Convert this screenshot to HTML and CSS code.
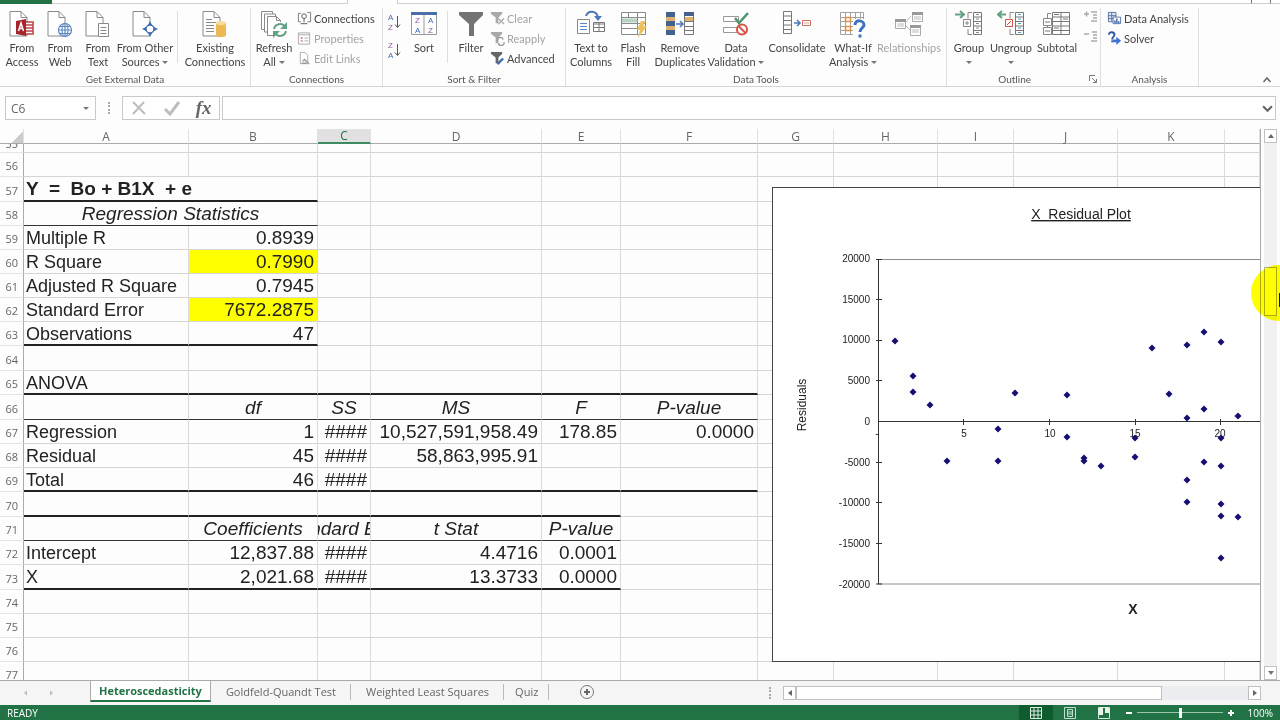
FILE: index.html
```html
<!DOCTYPE html>
<html lang="en">
<head>
    <meta charset="UTF-8">
    <meta name="viewport" content="width=device-width, initial-scale=1.0">
    <title>Heteroscedasticity</title>
    <link rel="stylesheet" href="styles.css">
</head>
<body>
    <!-- shared icon shapes -->
    <svg class="defs" aria-hidden="true">
        <symbol id="page" viewBox="0 0 28 28">
            <path d="M2 1.5h11l6 6v18.5h-17z" fill="#fff" stroke="#8a8a8a"/>
            <path d="M13 1.5v6h6" fill="none" stroke="#8a8a8a"/>
        </symbol>
        <symbol id="funnel" viewBox="0 0 28 28">
            <path d="M2 2h24v3l-9 9v12h-5v-12l-10-9z"/>
        </symbol>
    </svg>

    <div class="tab-strip">
        <div class="file-tab"></div>
        <div class="strip-left"></div>
        <div class="strip-active"></div>
        <div class="strip-rest"></div>
        <div class="strip-mark"></div>
        <div class="strip-end"></div>
    </div>

    <div class="ribbon">
        <section class="group">
            <div class="tools first">
                <button class="tool small">
                    <svg viewBox="0 0 28 28"><use href="#page"/><path d="M17 12h8v12h-8" fill="#fff" stroke="#b8444a" stroke-width="1.5"/><path d="M17 15h8M17 18h8M17 21h8" stroke="#b8444a" stroke-width="1.5"/><path d="M8 11l10-2v17l-10-2z" fill="#a4262c"/><path d="M10.5 21l2.5-8 2.5 8M11 18.5h4" fill="none" stroke="#fff" stroke-width="1.5"/></svg>
                    <span>From<br>Access</span>
                </button>
                <button class="tool small">
                    <svg viewBox="0 0 28 28"><use href="#page"/><g fill="#fff" stroke="#5b86c0" stroke-width="1.2"><circle cx="19" cy="20" r="6.5"/><ellipse cx="19" cy="20" rx="3" ry="6.5"/><path d="M12.5 20h13M14 16.5h10M14 23.5h10M19 13.5v13" fill="none"/></g></svg>
                    <span>From<br>Web</span>
                </button>
                <button class="tool small">
                    <svg viewBox="0 0 28 28"><use href="#page"/><path d="M14.5 13.5h10v13h-10z" fill="#fff" stroke="#8a8a8a"/><path d="M16.5 17.5h6M16.5 20.5h6M16.5 23.5h6" stroke="#8a8a8a"/></svg>
                    <span>From<br>Text</span>
                </button>
                <button class="tool large">
                    <svg viewBox="0 0 28 28"><use href="#page"/><circle cx="19" cy="19" r="4" fill="#fff" stroke="#3f69b0" stroke-width="1.5"/><path d="M19 11l2 4h-4zM19 27l2-4h-4zM11 19l4-2v4zM27 19l-4-2v4z" fill="#3f69b0"/></svg>
                    <span>From Other<br>Sources <i class="caret"></i></span>
                </button>
                <div class="divider"></div>
                <button class="tool wide">
                    <svg viewBox="0 0 28 28"><use href="#page"/><path d="M5 9.5h6M5 12.5h10M5 15.5h8M5 18.5h8M5 21.5h8" stroke="#8a8a8a"/><path d="M15 13v12c0 3 10 3 10 0v-12z" fill="#ecba55"/><ellipse cx="20" cy="13" rx="5" ry="2" fill="#f7dc9c"/></svg>
                    <span>Existing<br>Connections</span>
                </button>
            </div>
            <h2>Get External Data</h2>
        </section>

        <section class="group refresh">
            <div class="tools">
                <button class="tool medium">
                    <svg viewBox="0 0 28 28"><g fill="#fff" stroke="#8a8a8a"><path d="M1.5 1.5h11v18h-11z"/><path d="M4.5 4h11v18h-11z"/><path d="M7.5 6.5h9l4 4v15h-13z"/><path d="M16.5 6.5v4h4" fill="none"/></g><circle cx="20" cy="20" r="8" fill="#fff"/><g fill="none" stroke="#63a183" stroke-width="2"><path d="M14 19a6 6 0 0 1 11-2M26 21a6 6 0 0 1-11 2"/></g><path d="M27 12v7h-7zM13 28v-7h7z" fill="#63a183"/></svg>
                    <span>Refresh<br>All <i class="caret"></i></span>
                </button>
                <div class="stack">
                    <button class="line"><svg viewBox="0 0 16 16"><path d="M4 2.5h-2.5v9h2.5M11 1.5h3.5v10h-3.5" fill="none" stroke="#777"/><circle cx="7.5" cy="5.5" r="2.5" fill="none" stroke="#555"/><path d="M7.5 8v4M4 13.5h7" stroke="#555"/></svg>Connections</button>
                    <button class="line" disabled><svg viewBox="0 0 16 16"><path d="M1.5 2h12v12h-12z" fill="none" stroke="#aaa"/><path d="M1.5 4h12" stroke="#aaa"/><path d="M4 7.5h2M4 10.5h2" stroke="#c99" stroke-width="2"/><path d="M8 7.5h4M8 10.5h4" stroke="#aaa"/></svg>Properties</button>
                    <button class="line" disabled><svg viewBox="0 0 16 16"><path d="M3.5 1.5h5l3 3v9h-8z" fill="none" stroke="#aaa"/><path d="M6 11l2-2 2 2 3 3M5 13h5" fill="none" stroke="#999" stroke-width="1.5"/></svg>Edit Links</button>
                </div>
            </div>
            <h2>Connections</h2>
        </section>

        <section class="group sort">
            <div class="tools">
                <div class="stack az">
                    <button class="mini" aria-label="Sort A to Z"><svg viewBox="0 0 14 20"><text x="1" y="8" class="blue">A</text><text x="1" y="18" class="violet">Z</text><path d="M10.5 4v11M8 12.5l2.5 3 2.5-3" fill="none" stroke="#555"/></svg></button>
                    <button class="mini" aria-label="Sort Z to A"><svg viewBox="0 0 14 20"><text x="1" y="8" class="violet">Z</text><text x="1" y="18" class="blue">A</text><path d="M10.5 4v11M8 12.5l2.5 3 2.5-3" fill="none" stroke="#555"/></svg></button>
                </div>
                <button class="tool small">
                    <svg viewBox="0 0 28 28" class="letters"><path d="M1.5 3.5h25v21h-25z" fill="#fff" stroke="#999"/><path d="M1 2h26v3h-26z" fill="#4a6fa8"/><path d="M14 5v20" stroke="#999"/><text x="5" y="13" class="violet">Z</text><text x="5" y="23" class="blue">A</text><text x="18" y="13" class="blue">A</text><text x="18" y="23" class="violet">Z</text></svg>
                    <span>Sort</span>
                </button>
                <div class="divider"></div>
                <button class="tool small">
                    <svg viewBox="0 0 28 28" fill="#737373"><use href="#funnel"/></svg>
                    <span>Filter</span>
                </button>
                <div class="stack">
                    <button class="line" disabled><svg viewBox="0 0 16 16"><path d="M1 1h12v2l-4 4v6h-3v-6l-5-4z" fill="#aaa"/><path d="M9 8l6 6M15 8l-6 6" stroke="#aaa" stroke-width="1.5"/></svg>Clear</button>
                    <button class="line" disabled><svg viewBox="0 0 16 16"><path d="M1 1h12v2l-4 4v6h-3v-6l-5-4z" fill="#aaa"/><path d="M8 11a3 3 0 0 1 6-2M15 12a3 3 0 0 1-6 1" fill="none" stroke="#999" stroke-width="1.5"/></svg>Reapply</button>
                    <button class="line"><svg viewBox="0 0 16 16"><path d="M1 1h12v2l-4 4v6h-3v-6l-5-4z" fill="#666"/><path d="M8 14l6-6" stroke="#3f69b0" stroke-width="2.5"/></svg>Advanced</button>
                </div>
            </div>
            <h2>Sort &amp; Filter</h2>
        </section>

        <section class="group data">
            <div class="tools">
                <button class="tool medium">
                    <svg viewBox="0 0 28 28"><path d="M9 6c2-6 11-6 12 2" fill="none" stroke="#4a78b8" stroke-width="2"/><path d="M17 6h8l-4 5z" fill="#4a78b8"/><path d="M.5 9.5h12v14h-12z" fill="#fff" stroke="#888"/><path d="M3 13.5h7M3 16.5h7M3 19.5h7" stroke="#5b86c0"/><path d="M16.5 12.5h11v9h-11z" fill="#fff" stroke="#777"/><path d="M16 14h12M22 12v9M16 17.5h12" stroke="#777"/></svg>
                    <span>Text to<br>Columns</span>
                </button>
                <button class="tool small">
                    <svg viewBox="0 0 28 28"><path d="M2.5 2.5h24v22h-24z" fill="#fff" stroke="#8a8a8a"/><path d="M2 7.5h24M2 13.5h24M2 18.5h18M9.5 2v5M18.5 2v22" stroke="#8a8a8a"/><path d="M3 10.5h15" stroke="#b5d3be" stroke-width="4"/><path d="M22 11h5l-3 5h4l-9 12 2-8h-3z" fill="#eec05c"/></svg>
                    <span>Flash<br>Fill</span>
                </button>
                <button class="tool large">
                    <svg viewBox="0 0 28 28"><path d="M0 2h9v23h-9z" fill="#44618f"/><path d="M0 7h9v4h-9zM0 16h9v4h-9z" fill="#deb171"/><path d="M10 14h6M14 11l3 3-3 3" fill="none" stroke="#4a78b8" stroke-width="1.5"/><path d="M18.5 2.5h9v22h-9z" fill="#fff" stroke="#777"/><path d="M18 2h10v4h-10z" fill="#44618f"/><path d="M19 7h8v4h-8z" fill="#deb171"/><path d="M18 16.5h10M18 20.5h10M18 11.5h10" stroke="#777"/></svg>
                    <span>Remove<br>Duplicates</span>
                </button>
                <button class="tool large">
                    <svg viewBox="0 0 28 28"><path d="M1.5 6.5h15v5h-15zM1.5 17.5h14v5h-14z" fill="#fff" stroke="#999"/><path d="M13 8l4 5 9-10" fill="none" stroke="#52936f" stroke-width="2.5"/><circle cx="20" cy="19.5" r="5" fill="#fff" stroke="#d65345" stroke-width="2"/><path d="M16.5 16l7 7" stroke="#d65345" stroke-width="2"/></svg>
                    <span>Data<br>Validation <i class="caret"></i></span>
                </button>
                <button class="tool wide">
                    <svg viewBox="0 0 28 28"><path d="M.5 1.5h8v22h-8zM.5 6h8M.5 10.5h8M.5 15h8M.5 19.5h8" fill="#fff" stroke="#777"/><path d="M11 13h6M14 10l3 3-3 3" fill="none" stroke="#4a78b8" stroke-width="1.5"/><path d="M19.5 10.5h8v5h-8z" fill="#fff" stroke="#d07065"/><path d="M21 13h5" stroke="#e2a49d"/></svg>
                    <span>Consolidate</span>
                </button>
                <button class="tool medium">
                    <svg viewBox="0 0 28 28"><path d="M1.5 2.5h23v22h-23zM6.5 2v22M11.5 2v22M16.5 2v22M21.5 2v22M1 7.5h23M1 11.5h23M1 16.5h23M1 20.5h23" fill="#fff" stroke="#a2a2a2"/><path d="M6.5 7.5h5v4h-5zM6.5 16.5h5v4h-5z" fill="#fff" stroke="#e09040" stroke-width="1.5"/><path d="M14 9h13v18h-13z" fill="#fff"/><path d="M16 15c0-6 9-5 9 0 0 3-4 3-4 7M21 24.5v3" fill="none" stroke="#3f72bd" stroke-width="3"/></svg>
                    <span>What-If<br>Analysis <i class="caret"></i></span>
                </button>
                <button class="tool wide" disabled>
                    <svg viewBox="0 0 28 28"><path d="M10 13l6-7M10 15l6 6" stroke="#bbb"/><path d="M.5 9.5h10v9h-10zM17.5 2.5h10v9h-10zM15.5 15.5h10v10h-10z" fill="#fff" stroke="#aaa"/><path d="M0 10.5h11M17 3.5h11M15 16.5h11" stroke="#999" stroke-width="3"/><path d="M2 14h7M2 16h7M19 7h7M19 9h7M17 20h7M17 22h7" stroke="#bbb"/></svg>
                    <span>Relationships</span>
                </button>
            </div>
            <h2>Data Tools</h2>
        </section>

        <section class="group outline">
            <div class="tools">
                <button class="tool small">
                    <svg viewBox="0 0 28 28"><path d="M0 4.5h8M5 1l4 3.5-4 3.5" fill="none" stroke="#63a183" stroke-width="2"/><path d="M17 2.5h-4v6M13 19v5.5h4" fill="none" stroke="#888"/><path d="M8.5 9.5h7v7h-7zM10 13h4M12 11v4" fill="none" stroke="#888"/><path d="M18.5 2.5h8v22h-8zM18 7h9M18 11.5h9M18 16h9M18 20.5h9" fill="#fff" stroke="#777"/><path d="M21 4.5h3M21 9h3M21 13.5h3M21 18h3M21 22.5h3" stroke="#888"/></svg>
                    <span>Group<br><i class="caret"></i></span>
                </button>
                <button class="tool medium">
                    <svg viewBox="0 0 28 28"><path d="M1 4.5h8M5 1l-4 3.5 4 3.5" fill="none" stroke="#63a183" stroke-width="2"/><path d="M17 2.5h-4v6M13 19v5.5h4" fill="none" stroke="#888"/><path d="M8.5 9.5h7v7h-7zM10 15l4-4" fill="#fff" stroke="#d65345"/><path d="M18.5 2.5h8v22h-8zM18 7h9M18 11.5h9M18 16h9M18 20.5h9" fill="#fff" stroke="#777"/><path d="M21 4.5h3M21 9h3M21 13.5h3M21 18h3M21 22.5h3" stroke="#5b9bb8"/></svg>
                    <span>Ungroup<br><i class="caret"></i></span>
                </button>
                <button class="tool medium">
                    <svg viewBox="0 0 28 28"><path d="M8 3.5h-3.5v5M4.5 15v2" fill="none" stroke="#888"/><path d="M9.5 2.5h17v22h-17zM9 7h18M9 11.5h18M9 16h18M9 20.5h18M18 2v22" fill="#fff" stroke="#777"/><path d="M.5 8.5h8v7h-8zM.5 17.5h8v7h-8z" fill="#fff" stroke="#888"/><path d="M2 12h5M2 21h5M11 4.5h5M20 9h5M11 18h5" stroke="#777"/></svg>
                    <span>Subtotal</span>
                </button>
                <div class="stack">
                    <button class="mini" disabled aria-label="Show Detail"><svg viewBox="0 0 14 20"><path d="M0 6h5M2.5 3.5v5M7 4h6M9 7h4M9 10h4M7 13h6" stroke="#aaa" stroke-width="1.5"/></svg></button>
                    <button class="mini" disabled aria-label="Hide Detail"><svg viewBox="0 0 14 20"><path d="M0 6h5M8 4h5M9 7h4M9 10h4M7 13h6" stroke="#aaa" stroke-width="1.5"/></svg></button>
                </div>
            </div>
            <h2>Outline <button class="launcher" aria-label="Outline settings"><svg viewBox="0 0 8 8"><path d="M.5 6v-5.5h5.5M3 3l4 4M7.5 4v3.5h-3.5" fill="none" stroke="#777"/></svg></button></h2>
        </section>

        <section class="group analysis">
            <div class="tools">
                <div class="stack">
                    <button class="line"><svg viewBox="0 0 16 16"><path d="M1.5 1.5h8v10h-8zM1 5h9M1 8h9M5 1v10" fill="#dfe6f3" stroke="#5874a8"/><path d="M6.5 6.5h8v7h-8z" fill="#fff" stroke="#5874a8"/><path d="M8.5 13v-3M10.5 13v-5M12.5 13v-2" stroke="#3f69b0" stroke-width="1.5"/></svg>Data Analysis</button>
                    <button class="line"><svg viewBox="0 0 16 16"><path d="M2 4c0-4 6-3 6 0 0 2-2.5 2-2.5 5M5.5 10v2" fill="none" stroke="#2f55a8" stroke-width="2"/><path d="M6 9h4v-3l5 4.5-5 4.5v-3h-4z" fill="#3f72d0"/></svg>Solver</button>
                </div>
            </div>
            <h2>Analysis</h2>
        </section>

        <button class="collapse" aria-label="Collapse the ribbon"><svg viewBox="0 0 10 10"><path d="M1.5 7l3.5-4 3.5 4" fill="none" stroke="#666" stroke-width="1.5"/></svg></button>
    </div>

    <div class="formula-bar">
        <div class="name-box">
            <input type="text" value="C6" aria-label="Name box">
            <i class="caret"></i>
        </div>
        <div class="dots"></div>
        <div class="fx-box">
            <button aria-label="Cancel"><svg viewBox="0 0 18 16"><path d="M3 2l12 12M14 2l-11 12" stroke="#bdbdbd" stroke-width="2"/></svg></button>
            <button aria-label="Enter"><svg viewBox="0 0 18 16"><path d="M2 9l5 5 9-12" fill="none" stroke="#bdbdbd" stroke-width="3"/></svg></button>
            <button class="fx" aria-label="Insert function">fx</button>
        </div>
        <div class="formula">
            <input type="text" aria-label="Formula">
            <svg viewBox="0 0 10 10"><path d="M1 3l4 4 4-4" fill="none" stroke="#666" stroke-width="2"/></svg>
        </div>
    </div>

    <div class="workspace">
        <main class="sheet">
            <table>
                <colgroup>
                    <col class="c-num"><col class="c-a"><col class="c-b"><col class="c-c"><col class="c-d"><col class="c-e"><col class="c-f">
                    <col class="c-g"><col class="c-h"><col class="c-g"><col class="c-h"><col class="c-k"><col>
                </colgroup>
                <thead>
                    <tr><th class="corner"></th><th>A</th><th>B</th><th class="selected">C</th><th>D</th><th>E</th><th>F</th><th>G</th><th>H</th><th>I</th><th>J</th><th>K</th><th></th></tr>
                </thead>
                <tbody>
                    <tr class="cut"><th><div>55</div></th><td></td><td></td><td></td><td></td><td></td><td></td><td></td><td></td><td></td><td></td><td></td><td></td></tr>
                    <tr><th>56</th><td></td><td></td><td></td><td></td><td></td><td></td><td></td><td></td><td></td><td></td><td></td><td></td></tr>
                    <tr class="tall"><th>57</th><td colspan="2" class="model thick">Y  =  Bo + B1X  + e</td><td></td><td></td><td></td><td></td><td></td><td></td><td></td><td></td><td></td><td></td></tr>
                    <tr><th>58</th><td colspan="2" class="head thin">Regression Statistics</td><td></td><td></td><td></td><td></td><td></td><td></td><td></td><td></td><td></td><td></td></tr>
                    <tr><th>59</th><td>Multiple R</td><td class="num">0.8939</td><td></td><td></td><td></td><td></td><td></td><td></td><td></td><td></td><td></td><td></td></tr>
                    <tr><th>60</th><td>R Square</td><td class="num marked">0.7990</td><td></td><td></td><td></td><td></td><td></td><td></td><td></td><td></td><td></td><td></td></tr>
                    <tr><th>61</th><td>Adjusted R Square</td><td class="num">0.7945</td><td></td><td></td><td></td><td></td><td></td><td></td><td></td><td></td><td></td><td></td></tr>
                    <tr><th>62</th><td>Standard Error</td><td class="num marked">7672.2875</td><td></td><td></td><td></td><td></td><td></td><td></td><td></td><td></td><td></td><td></td></tr>
                    <tr><th>63</th><td class="thick">Observations</td><td class="num thick">47</td><td></td><td></td><td></td><td></td><td></td><td></td><td></td><td></td><td></td><td></td></tr>
                    <tr class="tall"><th>64</th><td></td><td></td><td></td><td></td><td></td><td></td><td></td><td></td><td></td><td></td><td></td><td></td></tr>
                    <tr><th>65</th><td class="thick">ANOVA</td><td class="thick"></td><td class="thick"></td><td class="thick"></td><td class="thick"></td><td class="thick"></td><td></td><td></td><td></td><td></td><td></td><td></td></tr>
                    <tr class="tall"><th>66</th><td class="thin"></td><td class="head thin">df</td><td class="head thin">SS</td><td class="head thin">MS</td><td class="head thin">F</td><td class="head thin">P-value</td><td></td><td></td><td></td><td></td><td></td><td></td></tr>
                    <tr><th>67</th><td>Regression</td><td class="num">1</td><td class="num">####</td><td class="num">10,527,591,958.49</td><td class="num">178.85</td><td class="num">0.0000</td><td></td><td></td><td></td><td></td><td></td><td></td></tr>
                    <tr><th>68</th><td>Residual</td><td class="num">45</td><td class="num">####</td><td class="num">58,863,995.91</td><td></td><td></td><td></td><td></td><td></td><td></td><td></td><td></td></tr>
                    <tr><th>69</th><td class="thick">Total</td><td class="num thick">46</td><td class="num thick">####</td><td class="thick"></td><td class="thick"></td><td class="thick"></td><td></td><td></td><td></td><td></td><td></td><td></td></tr>
                    <tr class="tall"><th>70</th><td class="thick"></td><td class="thick"></td><td class="thick"></td><td class="thick"></td><td class="thick"></td><td></td><td></td><td></td><td></td><td></td><td></td><td></td></tr>
                    <tr><th>71</th><td class="thin"></td><td class="head thin">Coefficients</td><td class="head thin"><div class="clipped">Standard Error</div></td><td class="head thin">t Stat</td><td class="head thin">P-value</td><td></td><td></td><td></td><td></td><td></td><td></td><td></td></tr>
                    <tr><th>72</th><td>Intercept</td><td class="num">12,837.88</td><td class="num">####</td><td class="num">4.4716</td><td class="num">0.0001</td><td></td><td></td><td></td><td></td><td></td><td></td><td></td></tr>
                    <tr class="tall"><th>73</th><td class="thick">X</td><td class="num thick">2,021.68</td><td class="num thick">####</td><td class="num thick">13.3733</td><td class="num thick">0.0000</td><td></td><td></td><td></td><td></td><td></td><td></td><td></td></tr>
                    <tr><th>74</th><td></td><td></td><td></td><td></td><td></td><td></td><td></td><td></td><td></td><td></td><td></td><td></td></tr>
                    <tr><th>75</th><td></td><td></td><td></td><td></td><td></td><td></td><td></td><td></td><td></td><td></td><td></td><td></td></tr>
                    <tr><th>76</th><td></td><td></td><td></td><td></td><td></td><td></td><td></td><td></td><td></td><td></td><td></td><td></td></tr>
                    <tr><th>77</th><td></td><td></td><td></td><td></td><td></td><td></td><td></td><td></td><td></td><td></td><td></td><td></td></tr>
                </tbody>
            </table>

            <!-- residual plot floats over the cells -->
            <svg class="chart" viewBox="772 187 620 475" width="620" height="475">
                <defs><path id="pt" d="M0-3.5l3.5 3.5-3.5 3.5-3.5-3.5z"/></defs>
                <rect x="772.5" y="187.5" width="619" height="474" fill="#fff" stroke="#444"/>
                <text class="chart-title" x="1081" y="219">X&#160; Residual Plot</text>
                <path d="M878.5 259.5h432v324.5h-432" fill="none" stroke="#8c8c8c"/>
                <path d="M878.5 259v325M876 259.5h6M876 299.5h6M876 340.5h6M876 380.5h6M878 421.5h432M876 462.5h6M876 502.5h6M876 543.5h6M876 584h6M963.5 419v6M1049.5 419v6M1135.5 419v6M1220.5 419v6" fill="none" stroke="#333"/>
                <g class="y-labels">
                    <text x="870" y="262">20000</text><text x="870" y="303">15000</text><text x="870" y="343">10000</text>
                    <text x="870" y="384">5000</text><text x="870" y="425">0</text><text x="870" y="466">-5000</text>
                    <text x="870" y="506">-10000</text><text x="870" y="547">-15000</text><text x="870" y="588">-20000</text>
                </g>
                <g class="x-labels">
                    <text x="877" y="437">-</text><text x="964" y="437">5</text><text x="1050" y="437">10</text><text x="1135" y="437">15</text><text x="1220" y="437">20</text>
                </g>
                <text class="y-title" transform="translate(806 405) rotate(-90)">Residuals</text>
                <text class="x-title" x="1133" y="614">X</text>
                <g fill="#150f70">
                    <use href="#pt" x="895" y="341"/><use href="#pt" x="913" y="376"/><use href="#pt" x="913" y="392"/>
                    <use href="#pt" x="930" y="405"/><use href="#pt" x="947" y="461"/><use href="#pt" x="998" y="429"/>
                    <use href="#pt" x="998" y="461"/><use href="#pt" x="1015" y="393"/><use href="#pt" x="1067" y="395"/>
                    <use href="#pt" x="1067" y="437"/><use href="#pt" x="1084" y="458"/><use href="#pt" x="1084" y="461"/>
                    <use href="#pt" x="1101" y="466"/><use href="#pt" x="1135" y="438"/><use href="#pt" x="1135" y="457"/>
                    <use href="#pt" x="1152" y="348"/><use href="#pt" x="1169" y="394"/><use href="#pt" x="1187" y="345"/>
                    <use href="#pt" x="1187" y="418"/><use href="#pt" x="1187" y="480"/><use href="#pt" x="1187" y="502"/>
                    <use href="#pt" x="1204" y="332"/><use href="#pt" x="1204" y="409"/><use href="#pt" x="1204" y="462"/>
                    <use href="#pt" x="1221" y="342"/><use href="#pt" x="1221" y="438"/><use href="#pt" x="1221" y="466"/>
                    <use href="#pt" x="1221" y="504"/><use href="#pt" x="1221" y="516"/><use href="#pt" x="1221" y="558"/>
                    <use href="#pt" x="1238" y="416"/><use href="#pt" x="1238" y="517"/>
                </g>
            </svg>
        </main>

        <div class="v-scroll">
            <button class="arrow" aria-label="Scroll up"><svg viewBox="0 0 8 8"><path d="M1 6l3-4 3 4z" fill="#666"/></svg></button>
            <div class="v-track"><div class="v-thumb"></div></div>
            <button class="arrow" aria-label="Scroll down"><svg viewBox="0 0 8 8"><path d="M1 2l3 4 3-4z" fill="#777"/></svg></button>
            <div class="halo"></div>
            <div class="pointer"></div>
        </div>
    </div>

    <div class="sheet-bar">
        <div class="sheet-nav">
            <button aria-label="Previous sheet"><svg viewBox="0 0 8 8"><path d="M5 1.5l-3 2.5 3 2.5z" fill="#bbb"/></svg></button>
            <button aria-label="Next sheet"><svg viewBox="0 0 8 8"><path d="M3 1.5l3 2.5-3 2.5z" fill="#bbb"/></svg></button>
        </div>
        <nav class="sheet-tabs">
            <button class="active">Heteroscedasticity</button>
            <button>Goldfeld-Quandt Test</button>
            <button>Weighted Least Squares</button>
            <button class="short">Quiz</button>
        </nav>
        <button class="add" aria-label="New sheet"><svg viewBox="0 0 16 16"><circle cx="8" cy="8" r="6.5" fill="none" stroke="#777"/><path d="M8 5v6M5 8h6" stroke="#666" stroke-width="2"/></svg></button>
        <div class="h-scroll">
            <div class="dots"></div>
            <button class="arrow" aria-label="Scroll left"><svg viewBox="0 0 8 8"><path d="M6 1l-4 3 4 3z" fill="#666"/></svg></button>
            <div class="h-track"><div class="h-thumb"></div></div>
            <button class="arrow" aria-label="Scroll right"><svg viewBox="0 0 8 8"><path d="M2 1l4 3-4 3z" fill="#666"/></svg></button>
        </div>
    </div>

    <footer class="status-bar">
        <span class="ready">READY</span>
        <button class="view on" aria-label="Normal view"><svg viewBox="0 0 14 12"><path d="M1.5.5h11v11h-11zM5 0v12M9 0v12M1 4h12M1 8h12" fill="none" stroke="#dcebe2"/></svg></button>
        <button class="view" aria-label="Page layout view"><svg viewBox="0 0 14 12"><path d="M1.5.5h11v11h-11zM4.5 2.5h5v7h-5zM5 5h4M5 7h4" fill="none" stroke="#c4dccd"/></svg></button>
        <button class="view" aria-label="Page break view"><svg viewBox="0 0 14 12"><path d="M1.5.5h11v11h-11z" fill="none" stroke="#dcebe2"/><path d="M2 1h4v7h-4zM8 1h4v5h-4z" fill="#e8f3ec"/></svg></button>
        <div class="zoom">
            <button aria-label="Zoom out"><svg viewBox="0 0 8 8"><path d="M1 4h6" stroke="#fff" stroke-width="2"/></svg></button>
            <input type="range" min="0" max="100" value="50" aria-label="Zoom">
            <button aria-label="Zoom in"><svg viewBox="0 0 8 8"><path d="M1 4h6M4 1v6" stroke="#fff" stroke-width="2"/></svg></button>
        </div>
        <span class="percent">100%</span>
    </footer>
</body>
</html>
```

FILE: styles.css
```css
* {
    box-sizing: border-box;
}
body {
    margin: 0;
    height: 100vh;
    display: flex;
    flex-direction: column;
    overflow: hidden;
    background: #fdfdfd;
    color: #444;
    font-family: "Open Sans", "Noto Sans", sans-serif;
    font-size: 11px;
}
button {
    margin: 0;
    padding: 0;
    border: 0;
    background: none;
    color: inherit;
    font: inherit;
}
button:disabled {
    color: #a3a3a3;
}
input {
    min-width: 0;
    border: 0;
    padding: 0;
    background: none;
    font: inherit;
    color: inherit;
    outline: none;
}
svg {
    display: block;
    flex: none;
}
.defs {
    position: absolute;
    width: 0;
    height: 0;
}
.caret {
    display: inline-block;
    border: 3px solid transparent;
    border-top-color: #777;
    border-bottom: 0;
    vertical-align: 2px;
}

/* strip of ribbon tabs, mostly scrolled away */
.tab-strip {
    display: flex;
    height: 4px;
    flex: none;
}
.tab-strip div {
    border-bottom: 1px solid #d0d0d0;
}
.tab-strip .file-tab {
    width: 52px;
    background: #217346;
    border-color: #217346;
}
.strip-left {
    width: 295px;
}
.tab-strip .strip-active {
    width: 51px;
    border: solid #d0d0d0;
    border-width: 0 1px;
}
.strip-rest {
    flex: 1;
}
.strip-mark {
    width: 20px;
    border-left: 1px solid #777;
    border-right: 1px solid #777;
}
.strip-end {
    width: 9px;
}

/* ribbon */
.ribbon {
    display: flex;
    flex: none;
    height: 83px;
    padding-top: 4px;
    border-bottom: 1px solid #d5d5d5;
    font-family: Lato, "Open Sans", sans-serif;
}
.group {
    display: flex;
    flex-direction: column;
    flex: none;
    width: 251px;
    height: 78px;
    border-right: 1px solid #dedede;
}
.group.refresh { width: 132px; }
.group.sort { width: 183px; }
.group.data { width: 381px; }
.group.outline { width: 154px; }
.group.analysis { width: 98px; }
.group h2 {
    display: flex;
    justify-content: center;
    margin: 0;
    font-size: 10px;
    line-height: 14px;
    font-weight: 400;
    color: #555;
}
.tools {
    display: flex;
    flex: 1;
}
.tools.first,
.outline .tools {
    padding-left: 3px;
}
.data .tools {
    padding-left: 2px;
}
.analysis .tools {
    padding-left: 6px;
}
.tool {
    display: flex;
    flex-direction: column;
    flex: none;
    align-items: center;
    gap: 3px;
    padding-top: 2px;
    line-height: 14px;
    white-space: nowrap;
}
.tool > svg {
    width: 28px;
    height: 28px;
}
.tool.small { width: 38px; }
.tool.medium { width: 46px; }
.tool.large { width: 56px; }
.tool.wide { width: 66px; }
.divider {
    flex: none;
    width: 1px;
    height: 52px;
    margin: 3px 4px 0;
    background: #dedede;
}
.stack {
    display: flex;
    flex-direction: column;
    flex: none;
}
.stack.az,
.outline .stack {
    width: 22px;
    align-items: center;
}
.line {
    display: flex;
    align-items: center;
    gap: 2px;
    height: 20px;
    white-space: nowrap;
}
.line svg {
    width: 15px;
    height: 15px;
}
.mini {
    height: 28px;
}
.outline .mini {
    height: 20px;
}
.mini svg {
    width: 14px;
    height: 20px;
}
.mini text,
.letters text {
    font: 8px "Liberation Sans", Arial, sans-serif;
}
.blue { fill: #3f69b0; }
.violet { fill: #8a5aa8; }
.launcher {
    margin: 0 0 0 58px;
}
.outline h2 {
    justify-content: flex-end;
    align-items: center;
    padding-right: 3px;
}
.launcher svg {
    width: 8px;
    height: 8px;
}
.collapse {
    margin: 0 8px 1px auto;
    align-self: flex-end;
}
.collapse svg {
    width: 10px;
    height: 10px;
}

/* formula bar */
.formula-bar {
    display: flex;
    flex: none;
    height: 24px;
    margin: 9px 4px 9px 5px;
}
.name-box,
.fx-box,
.formula {
    display: flex;
    align-items: center;
    border: 1px solid #c9c9c9;
    background: #fff;
}
.name-box {
    width: 91px;
    padding: 0 6px 0 5px;
    font-size: 12px;
    color: #666;
}
.name-box input {
    flex: 1;
}
.dots {
    width: 2px;
    height: 12px;
    margin: 6px 12px 0 12px;
    border-left: 2px dotted #aaa;
}
.fx-box {
    width: 98px;
    justify-content: space-around;
}
.fx-box svg {
    width: 18px;
    height: 16px;
}
.fx-box .fx {
    font: italic bold 19px "Liberation Serif", serif;
    color: #666;
}
.formula {
    flex: 1;
    margin-left: 2px;
    padding-right: 2px;
}
.formula input {
    flex: 1;
}
.formula svg {
    width: 11px;
    height: 11px;
}

/* sheet */
.workspace {
    display: flex;
    flex: 1;
    min-height: 0;
}
.sheet {
    position: relative;
    flex: 1;
    overflow: hidden;
    border-right: 1px solid #ababab;
}
table {
    width: 100%;
    table-layout: fixed;
    border-collapse: separate;
    border-spacing: 0;
}
.c-num { width: 24px; }
.c-a { width: 165px; }
.c-b { width: 129px; }
.c-c { width: 53px; }
.c-d { width: 171px; }
.c-e { width: 79px; }
.c-f { width: 137px; }
.c-g { width: 76px; }
.c-h { width: 104px; }
.c-k { width: 107px; }
th {
    padding: 0;
    font-size: 11px;
    font-weight: 400;
    color: #666;
}
thead th {
    height: 15px;
    line-height: 13px;
    font-size: 12px;
    border-right: 1px solid #e0e0e0;
    border-bottom: 1px solid #ababab;
}
thead .selected {
    background: #e1e1e1;
    color: #217346;
    border-bottom: 2px solid #3d8a63;
}
thead .corner {
    background: linear-gradient(135deg, transparent 70%, #ccc 70%);
}
tbody th {
    padding: 3px 5px 0 0;
    text-align: right;
    line-height: 18px;
    border-right: 1px solid #ababab;
    border-bottom: 1px solid #e4e4e4;
}
td {
    height: 24px;
    padding: 1px 3px 0 2px;
    overflow: hidden;
    border-right: 1px solid #dadada;
    border-bottom: 1px solid #d4d4d4;
    font: 18px/20px "Liberation Sans", Arial, sans-serif;
    color: #222;
    white-space: pre;
}
.tall td {
    height: 25px;
}
.cut th,
.cut td {
    height: 9px;
    padding: 0;
    line-height: 8px;
}
.cut th div {
    display: flex;
    align-items: flex-end;
    justify-content: flex-end;
    height: 8px;
    padding-right: 5px;
    overflow: hidden;
    line-height: 16px;
}
.num {
    font-size: 19px;
    text-align: right;
}
.head {
    padding: 1px 3px 0;
    font-size: 19px;
    font-style: italic;
    text-align: center;
}
.model {
    font-size: 19px;
    font-weight: 700;
}
.marked {
    background: #ffff00;
}
.thick {
    border-bottom: 2px solid #222;
}
.thin {
    border-bottom: 1px solid #333;
}
.clipped {
    display: flex;
    justify-content: center;
    margin: 0 -3px;
    overflow: hidden;
}

/* chart */
.chart {
    position: absolute;
    left: 772px;
    top: 58px;
    font-family: "Liberation Sans", Arial, sans-serif;
    fill: #222;
}
.chart-title {
    font-size: 14px;
    text-anchor: middle;
    text-decoration: underline;
}
.y-labels {
    font-size: 10px;
    text-anchor: end;
}
.x-labels {
    font-size: 10px;
    text-anchor: middle;
}
.y-title {
    font-size: 12px;
    text-anchor: middle;
}
.x-title {
    font-size: 14px;
    font-weight: 700;
    text-anchor: middle;
}

/* scrollbars */
.arrow {
    display: flex;
    align-items: center;
    justify-content: center;
    flex: none;
    width: 13px;
    height: 14px;
    border: 1px solid #c0c0c0;
    background: #fff;
}
.arrow svg {
    width: 8px;
    height: 8px;
}
.v-scroll {
    position: relative;
    display: flex;
    flex-direction: column;
    align-items: center;
    width: 19px;
}
.v-track {
    flex: 1;
    width: 13px;
    padding-top: 124px;
    background: #f1f1f1;
}
.v-thumb {
    height: 49px;
    border: 1px solid #ababab;
    background: #fff;
}
.halo {
    position: absolute;
    left: -10px;
    top: 136px;
    width: 56px;
    height: 56px;
    border-radius: 50%;
    background: #ffff00;
    mix-blend-mode: multiply;
}
.pointer {
    position: absolute;
    right: 0;
    top: 164px;
    width: 1px;
    height: 14px;
    background: #111;
}
.sheet-bar {
    display: flex;
    flex: none;
    height: 25px;
    padding-right: 19px;
    border-top: 1px solid #ababab;
    background: #f5f5f5;
}
.sheet-nav {
    display: flex;
    align-items: center;
    justify-content: center;
    gap: 17px;
    width: 90px;
    padding-right: 13px;
}
.sheet-nav svg {
    width: 8px;
    height: 8px;
}
.sheet-tabs {
    display: flex;
    height: 21px;
}
.sheet-tabs button {
    padding: 0 15px;
    background: linear-gradient(#bbb, #bbb) right center / 1px 16px no-repeat;
    color: #666;
    white-space: nowrap;
}
.sheet-tabs .short {
    padding: 0 11px;
}
.sheet-tabs .active {
    padding: 0 8px;
    border-right: 1px solid #ababab;
    border-left: 1px solid #ababab;
    border-bottom: 2px solid #217346;
    background: #fff;
    color: #217346;
    font-weight: 700;
}
.add {
    height: 22px;
    margin-left: 30px;
}
.add svg {
    width: 16px;
    height: 16px;
}
.h-scroll {
    display: flex;
    flex: none;
    width: 39%;
    height: 14px;
    margin: 5px 0 0 auto;
}
.h-scroll .dots {
    margin: 1px 12px 0 0;
}
.h-track {
    flex: 1;
    background: #ebedf0;
}
.h-thumb {
    width: 81%;
    height: 14px;
    border: 1px solid #c0c0c0;
    background: #fff;
}

/* status bar */
.status-bar {
    display: flex;
    align-items: center;
    flex: none;
    height: 15px;
    padding: 0 7px;
    background: #217346;
    color: #fff;
    font-size: 10px;
}
.ready {
    margin-right: auto;
}
.view {
    display: flex;
    align-items: center;
    justify-content: center;
    width: 34px;
    height: 15px;
}
.view.on {
    background: #0e5c2f;
}
.view svg {
    width: 14px;
    height: 12px;
}
.zoom {
    display: flex;
    align-items: center;
    gap: 4px;
    padding-left: 4px;
}
.zoom svg {
    width: 8px;
    height: 8px;
}
.zoom input {
    width: 86px;
    height: 12px;
    margin: 0;
    appearance: none;
}
.zoom input::-webkit-slider-runnable-track {
    height: 10px;
    background: linear-gradient(#9cc4ab, #9cc4ab) center / 100% 1px no-repeat;
}
.zoom input::-webkit-slider-thumb {
    appearance: none;
    width: 3px;
    height: 10px;
    background: #fff;
}
.percent {
    width: 38px;
    text-align: right;
}
```
